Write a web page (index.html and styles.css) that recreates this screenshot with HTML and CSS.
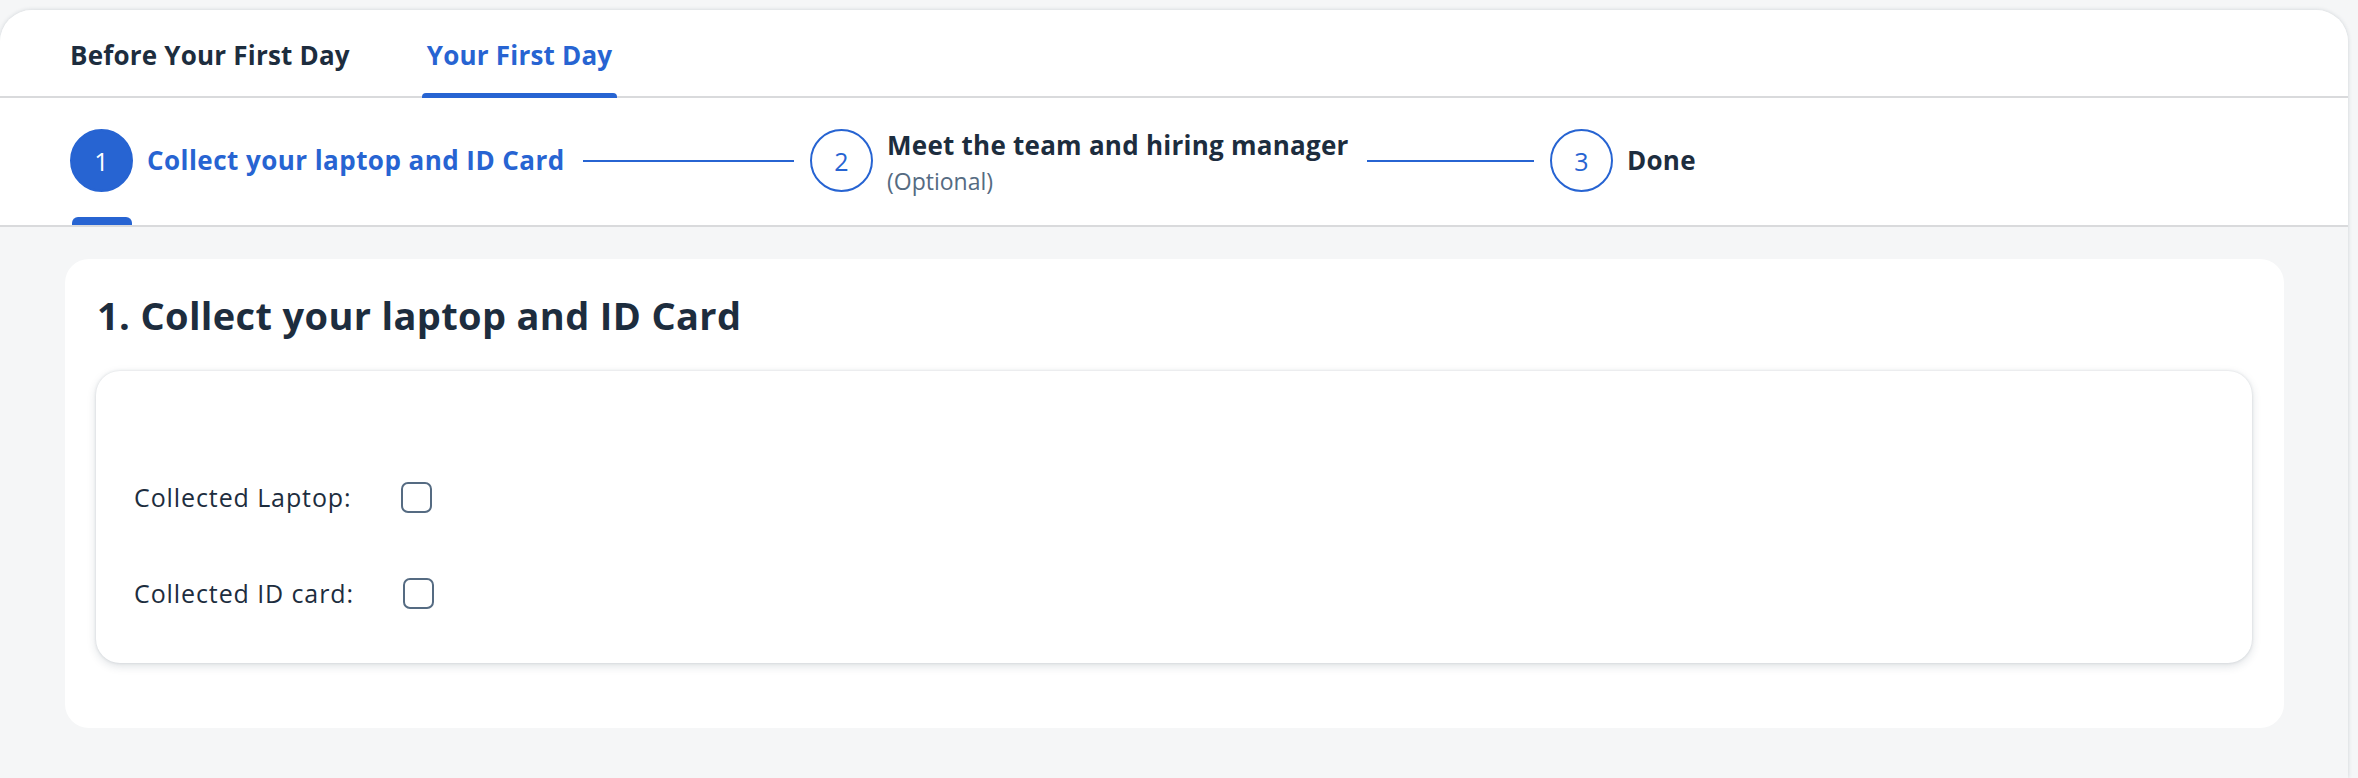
FILE: index.html
```html
<!DOCTYPE html>
<html lang="en">
<head>
<meta charset="utf-8">
<title>Onboarding</title>
<link rel="stylesheet" href="styles.css">
</head>
<body>
<div class="shell">
  <div class="tabbar">
    <div class="tab">Before Your First Day</div>
    <div class="tab tab-active">Your First Day</div>
  </div>
  <div class="stepper">
    <div class="step">
      <div class="circle circle-active">1</div>
      <div class="step-text"><div class="step-title step-title-active">Collect your laptop and ID Card</div></div>
      <div class="connector"></div>
    </div>
    <div class="step">
      <div class="circle">2</div>
      <div class="step-text step-text-two">
        <div class="step-title">Meet the team and hiring manager</div>
        <div class="step-sub">(Optional)</div>
      </div>
      <div class="connector"></div>
    </div>
    <div class="step step-last">
      <div class="circle">3</div>
      <div class="step-text"><div class="step-title">Done</div></div>
    </div>
    <div class="step-indicator"></div>
  </div>
  <div class="content">
    <div class="card">
      <h2 class="card-title">1. Collect your laptop and ID Card</h2>
      <div class="form-card">
        <div class="form-row">
          <span class="form-label">Collected Laptop:</span>
          <span class="checkbox"></span>
        </div>
        <div class="form-row">
          <span class="form-label">Collected ID card:</span>
          <span class="checkbox"></span>
        </div>
      </div>
    </div>
  </div>
</div>
</body>
</html>
```

FILE: styles.css
```css
* { box-sizing: border-box; }

html, body {
  margin: 0;
  padding: 0;
  background: #f5f6f7;
  font-family: "Open Sans", "Liberation Sans", Arial, sans-serif;
  color: #1d2d3e;
}

.shell {
  margin: 10px 10px 0 0;
  height: 768px;
  background: #f5f6f7;
  border-radius: 32px 32px 0 0;
  box-shadow: 0 0 4px rgba(34, 53, 72, 0.18);
  overflow: hidden;
}

.tabbar {
  height: 88px;
  background: #fff;
  border-bottom: 2px solid #d9dadc;
  display: flex;
  align-items: stretch;
  padding-left: 65px;
  gap: 67px;
}

.tab {
  position: relative;
  display: flex;
  align-items: center;
  padding: 4px 5px 0;
  font-size: 26px;
  letter-spacing: 0.2px;
  font-weight: bold;
  color: #1d2d3e;
}

.tab-active {
  color: #2764d2;
}

.tab-active::after {
  content: "";
  position: absolute;
  left: 0;
  right: 0;
  bottom: -2px;
  height: 5px;
  background: #2764d2;
  border-radius: 4px 4px 0 0;
}

.stepper {
  position: relative;
  height: 129px;
  background: #fff;
  border-bottom: 2px solid #d9dadc;
  display: flex;
  align-items: center;
  padding-left: 70px;
  padding-bottom: 2px;
}

.step {
  flex: 0 0 740px;
  display: flex;
  align-items: center;
}

.step-last {
  flex: 0 0 auto;
}

.circle {
  flex: 0 0 63px;
  width: 63px;
  height: 63px;
  border-radius: 50%;
  border: 2px solid #2764d2;
  color: #2764d2;
  display: flex;
  align-items: center;
  justify-content: center;
  font-size: 25px;
}

.circle-active {
  background: #2764d2;
  color: #fff;
}

.step-text {
  margin-left: 14px;
  display: flex;
  flex-direction: column;
  gap: 4px;
}

.step-text-two {
  padding-top: 5px;
}

.step-title {
  font-size: 26px;
  letter-spacing: 0.25px;
  line-height: 1.3;
  font-weight: bold;
  color: #1d2d3e;
  white-space: nowrap;
}

.step-title-active {
  color: #2764d2;
  letter-spacing: 0.45px;
}

.step-sub {
  font-size: 23px;
  line-height: 1.3;
  color: #556b82;
}

.connector {
  flex: 1;
  height: 2px;
  background: #2764d2;
  margin: 0 16px 0 18px;
}

.step-indicator {
  position: absolute;
  left: 72px;
  bottom: 0;
  width: 60px;
  height: 8px;
  background: #2764d2;
  border-radius: 6px 6px 0 0;
}

.content {
  padding: 32px 64px 0 65px;
}

.card {
  background: #fff;
  border-radius: 24px;
  padding: 32px 32px 65px 31px;
}

.card-title {
  margin: 0 0 31px 1px;
  font-size: 38px;
  letter-spacing: 0.35px;
  font-weight: bold;
  color: #1d2d3e;
  line-height: 1.3;
}

.form-card {
  background: #fff;
  border-radius: 24px;
  box-shadow: 0 0 3px rgba(34, 53, 72, 0.15), 0 3px 10px rgba(34, 53, 72, 0.15);
  padding: 78px 38px 22px;
}

.form-row {
  height: 96px;
  display: flex;
  align-items: center;
  gap: 49px;
}

.form-label {
  font-size: 25px;
  letter-spacing: 0.9px;
  color: #1d2d3e;
}

.checkbox {
  width: 31px;
  height: 31px;
  border: 2px solid #556b82;
  border-radius: 7px;
  background: #fff;
}
```
